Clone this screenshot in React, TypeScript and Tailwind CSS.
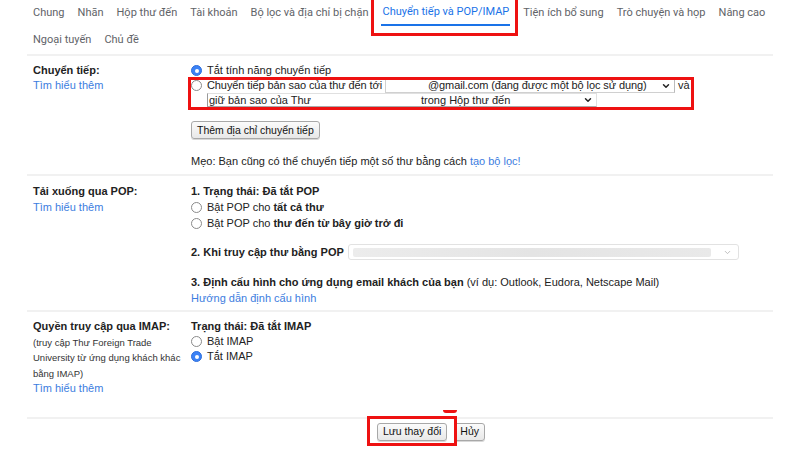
import { ChevronDown } from 'lucide-react';

const tabs = [
  'Chung',
  'Nhãn',
  'Hộp thư đến',
  'Tài khoản',
  'Bộ lọc và địa chỉ bị chặn',
  'Chuyển tiếp và POP/IMAP',
  'Tiện ích bổ sung',
  'Trò chuyện và họp',
  'Nâng cao',
];

function Radio({ checked = false }: { checked?: boolean }) {
  if (checked) {
    return (
      <span className="w-[11px] h-[11px] rounded-full bg-[#3b82f6] border border-[#2f6fdc] flex items-center justify-center shrink-0">
        <span className="w-[4px] h-[4px] rounded-full bg-white" />
      </span>
    );
  }
  return <span className="w-[11px] h-[11px] rounded-full bg-white border border-[#8a8a8a] shrink-0" />;
}

function Button({ label }: { label: string }) {
  return (
    <span className="inline-flex items-center h-[18px] px-[5px] border border-[#a8a8a8] rounded-[3px] bg-gradient-to-b from-[#fbfbfb] to-[#e8e8e8] text-[10.5px] text-[#111] shadow-[0_1px_0_#d8d8d8]">
      {label}
    </span>
  );
}

function Separator() {
  return <div className="mx-[27px] h-[2px] bg-[#f1f1f1]" />;
}

function Link({ children }: { children: React.ReactNode }) {
  return <span className="text-[#3c7de0]">{children}</span>;
}

export default function App() {
  return (
    <div
      className="relative w-[800px] h-[450px] overflow-hidden bg-white text-[#222] text-[11px]"
      style={{ fontFamily: '"Liberation Sans", Arial, sans-serif' }}
    >
      {/* tabs */}
      <div className="px-[33px] text-[#5f6368] text-[11px] whitespace-nowrap" style={{ fontFamily: 'Roboto, "Noto Sans", sans-serif' }}>
        <div className="flex gap-[13px] h-[27px]">
          {tabs.map((t) => {
            const active = t === 'Chuyển tiếp và POP/IMAP';
            return (
              <div
                key={t}
                className={
                  active
                    ? 'shrink-0 flex items-center h-[26px] pt-[1px] text-[#1a73e8] border-b-2 border-[#1a73e8] px-[1px]'
                    : 'shrink-0 flex items-center h-[26px] pt-[1px]'
                }
              >
                {t}
              </div>
            );
          })}
        </div>
        <div className="flex gap-[13px] h-[27px] items-center">
          <span>Ngoại tuyến</span>
          <span>Chủ đề</span>
        </div>
      </div>
      <Separator />

      {/* forwarding */}
      <div className="flex pl-[33px] pt-[7px] h-[118px]">
        <div className="w-[158px] leading-[15px]">
          <div className="font-bold">Chuyển tiếp:</div>
          <Link>Tìm hiểu thêm</Link>
        </div>
        <div className="leading-[15px]">
          <div className="flex items-center gap-[5px]">
            <Radio checked />
            <span>Tắt tính năng chuyển tiếp</span>
          </div>
          <div className="flex items-center gap-[5px] tracking-[-0.1px]">
            <Radio />
            <span>Chuyển tiếp bản sao của thư đến tới</span>
            <span className="flex items-center w-[290px] h-[14px] -ml-[2px] border border-[#d0d0d0] border-t-[#999] border-r-[#bbb] bg-white">
              <span className="pl-[42px] flex-1">@gmail.com (đang được một bộ lọc sử dụng)</span>
              <ChevronDown className="w-[10px] h-[10px] mr-[3px]" strokeWidth={3.5} />
            </span>
            <span className="-ml-[2px]">và</span>
          </div>
          <div className="flex items-center pl-[16px]">
            <span className="flex items-center w-[390px] h-[14px] border border-[#e0e0e0] border-l-[#999] border-b-[#aaa] bg-white">
              <span className="pl-[1px] w-[213px]">giữ bản sao của Thư</span>
              <span className="flex-1">trong Hộp thư đến</span>
              <ChevronDown className="w-[10px] h-[10px] mr-[3px]" strokeWidth={3.5} />
            </span>
          </div>
          <div className="mt-[14px]">
            <Button label="Thêm địa chỉ chuyển tiếp" />
          </div>
          <div className="mt-[15px]">
            Mẹo: Bạn cũng có thể chuyển tiếp một số thư bằng cách <Link>tạo bộ lọc!</Link>
          </div>
        </div>
      </div>
      <Separator />

      {/* POP */}
      <div className="flex pl-[33px] pt-[7px] h-[134px]">
        <div className="w-[158px] leading-[16px]">
          <div className="font-bold">Tải xuống qua POP:</div>
          <Link>Tìm hiểu thêm</Link>
        </div>
        <div className="leading-[16px]">
          <div className="font-bold">1. Trạng thái: Đã tắt POP</div>
          <div className="flex items-center gap-[5px]">
            <Radio />
            <span>
              Bật POP cho <b>tất cả thư</b>
            </span>
          </div>
          <div className="flex items-center gap-[5px]">
            <Radio />
            <span>
              Bật POP cho <b>thư đến từ bây giờ trở đi</b>
            </span>
          </div>
          <div className="flex items-center gap-[4px] mt-[13px]">
            <span className="font-bold">2. Khi truy cập thư bằng POP</span>
            <span className="flex items-center w-[391px] h-[16px] border border-[#e2e2e2] rounded-[3px] bg-white">
              <span className="ml-[4px] w-[358px] h-[9px] rounded-[2px] bg-gradient-to-r from-[#ececec] via-[#e4e4e4] to-[#e9e9e9]" />
              <span className="flex-1" />
              <ChevronDown className="w-[9px] h-[9px] mr-[6px] text-[#bbb]" strokeWidth={2.5} />
            </span>
          </div>
          <div className="mt-[14px]">
            <b>3. Định cấu hình cho ứng dụng email khách của bạn</b> (ví dụ: Outlook, Eudora, Netscape Mail)
          </div>
          <Link>Hướng dẫn định cấu hình</Link>
        </div>
      </div>
      <Separator />

      {/* IMAP */}
      <div className="flex pl-[33px] pt-[7px] h-[105px]">
        <div className="w-[158px] leading-[15.5px]">
          <div className="font-bold">Quyền truy cập qua IMAP:</div>
          <div className="text-[9.5px] text-[#333]">(truy cập Thư Foreign Trade</div>
          <div className="text-[9.5px] text-[#333]">University từ ứng dụng khách khác</div>
          <div className="text-[9.5px] text-[#333]">bằng IMAP)</div>
          <Link>Tìm hiểu thêm</Link>
        </div>
        <div className="leading-[15px]">
          <div className="font-bold">Trạng thái: Đã tắt IMAP</div>
          <div className="flex items-center gap-[5px]">
            <Radio />
            <span>Bật IMAP</span>
          </div>
          <div className="flex items-center gap-[5px]">
            <Radio checked />
            <span>Tắt IMAP</span>
          </div>
        </div>
      </div>
      <Separator />

      <div className="flex justify-center gap-[7px] pt-[4px] pl-[62px]">
        <Button label="Lưu thay đổi" />
        <Button label="Hủy" />
      </div>

      {/* red highlight boxes */}
      <div className="absolute left-[371px] top-[-3px] w-[147px] h-[39px] border-[3px] border-[#ee1111]" />
      <div className="absolute left-[188px] top-[77px] w-[506px] h-[33px] border-[3px] border-[#ee1111]" />
      <div className="absolute left-[367px] top-[416px] w-[90px] h-[30px] border-[3px] border-[#ee1111]" />
      <div className="absolute left-[443px] top-[410px] w-[14px] h-[3px] rounded-b-full bg-[#ee1111]" />
    </div>
  );
}
